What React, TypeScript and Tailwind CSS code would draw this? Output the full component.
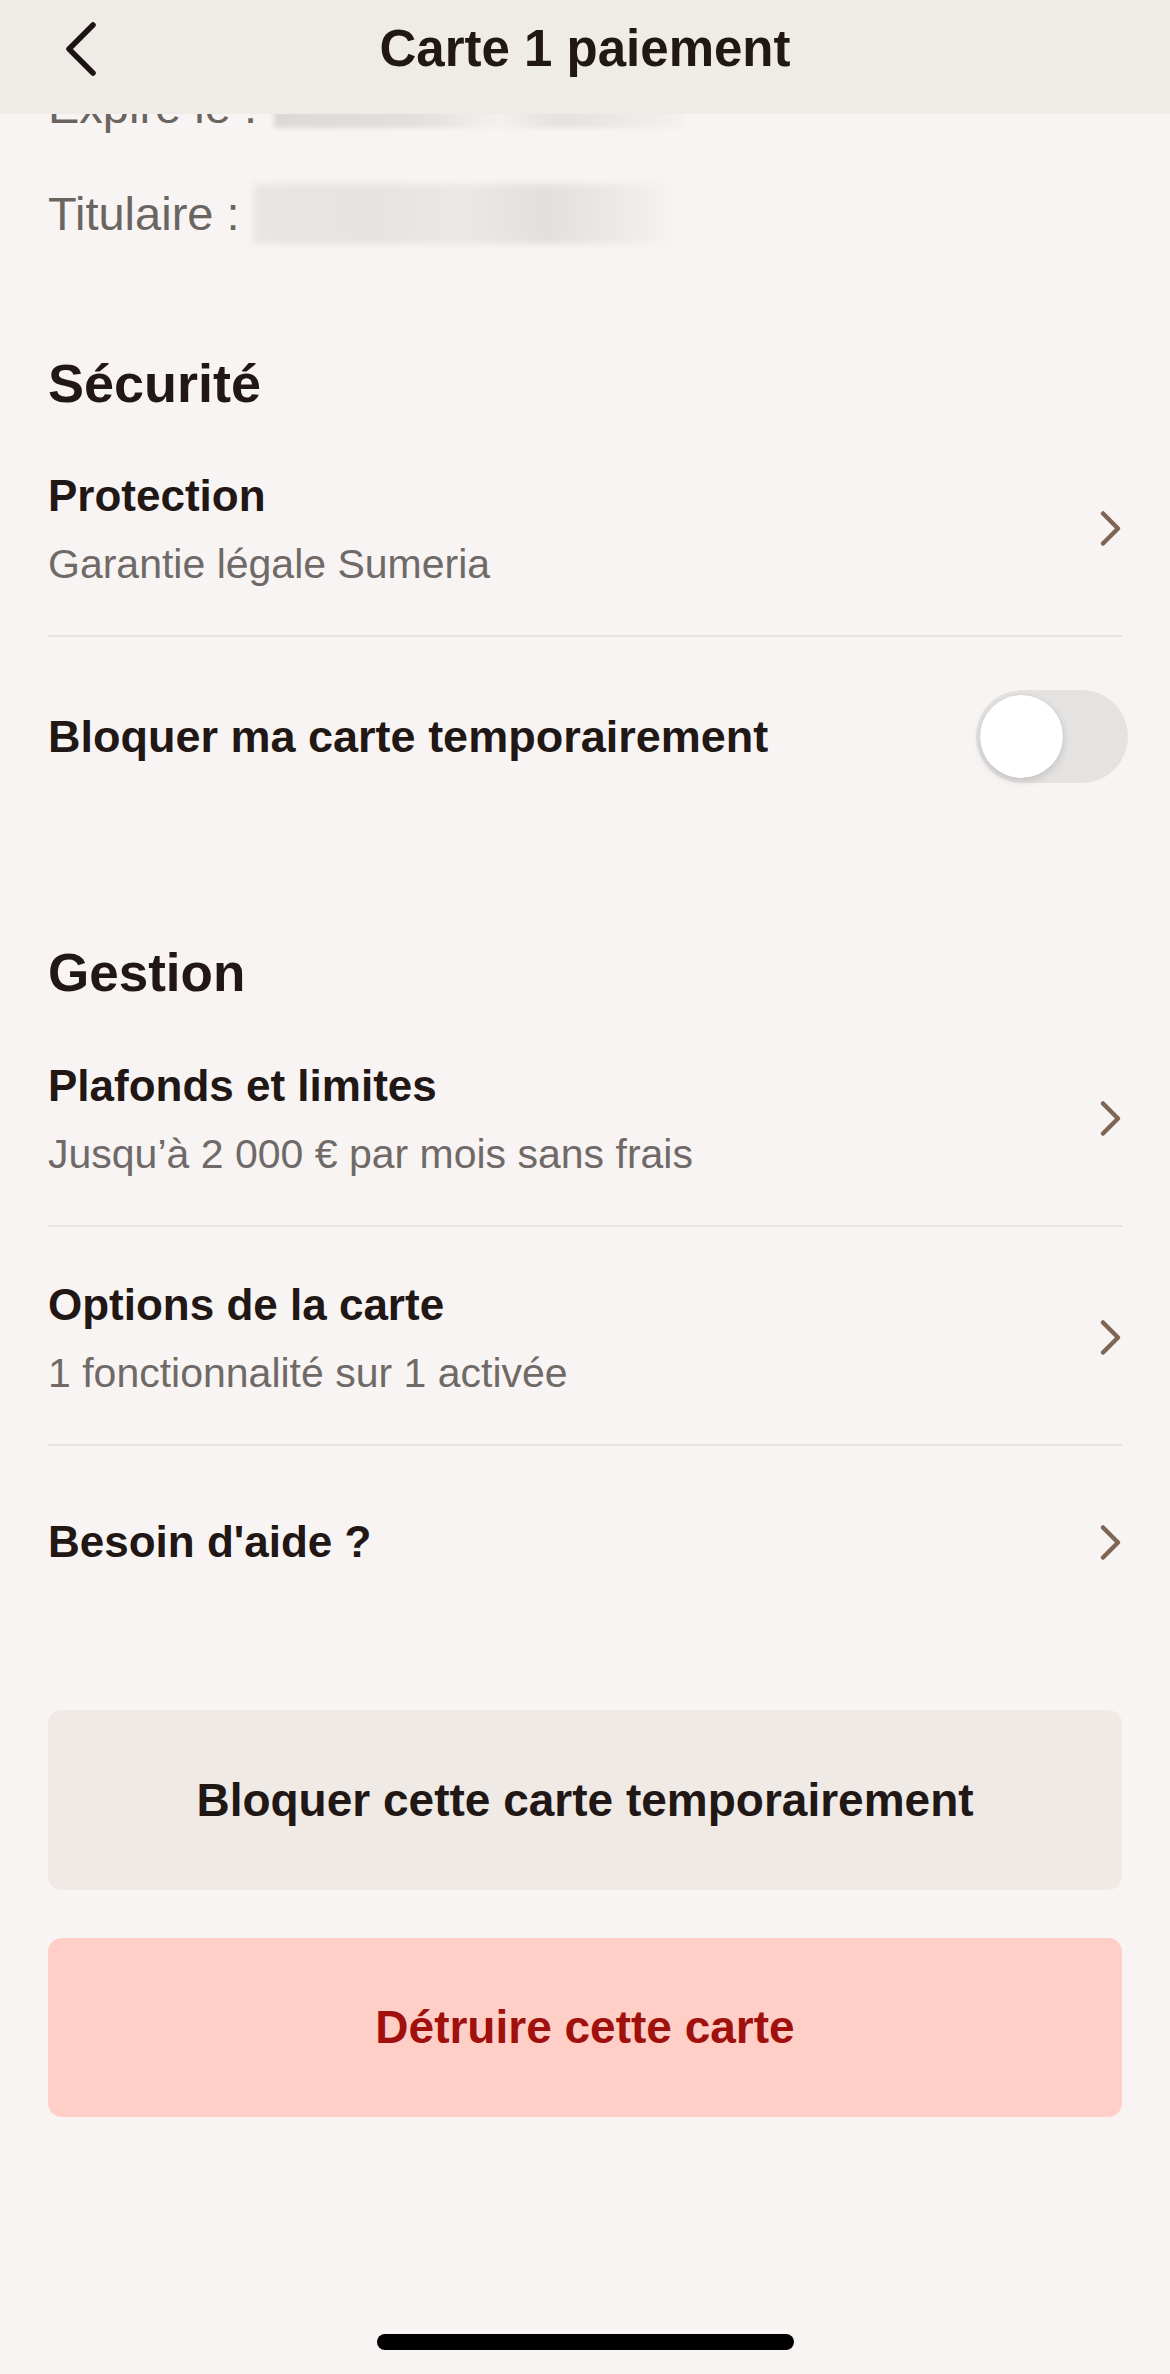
import React from "react";

type LinkRowProps = {
  title: string;
  subtitle?: string;
  className?: string;
};

function Chevron() {
  return (
    <svg width="23" height="37" viewBox="0 0 23 37" fill="none" className="shrink-0">
      <path d="M4 3.5 L19 18.5 L4 33.5" stroke="#7f6556" strokeWidth="4.5" strokeLinecap="round" strokeLinejoin="round" />
    </svg>
  );
}

function LinkRow({ title, subtitle, className = "" }: LinkRowProps) {
  return (
    <div className={["flex items-center justify-between", className].join(" ")}>
      <div>
        <p className="text-[44px] font-bold leading-[52px] text-[#211714]">{title}</p>
        {subtitle && (
          <p className="mt-[19px] text-[41px] leading-[46px] text-[#6f6a67]">{subtitle}</p>
        )}
      </div>
      <Chevron />
    </div>
  );
}

function Divider() {
  return <div className="h-[2px] bg-[#e9e3de]" />;
}

export default function App() {
  return (
    <div className="relative min-h-[2374px] w-full bg-[#f8f4f3] font-['Liberation_Sans',Arial,sans-serif] text-[#211714]">
      <header className="absolute inset-x-0 top-0 z-10 h-[114px] bg-[#efebe7]">
        <div className="flex h-[98px] items-center">
          <div className="w-[112px] pl-[63px]">
            <svg width="34" height="56" viewBox="0 0 34 56" fill="none">
              <path d="M30 4 L6 28 L30 52" stroke="#1c1412" strokeWidth="5.5" strokeLinecap="round" strokeLinejoin="round" />
            </svg>
          </div>
          <h1 className="flex-1 text-center text-[51px] font-bold leading-[56px]">Carte 1 paiement</h1>
          <div className="w-[112px]" />
        </div>
      </header>

      <main className="px-[48px] pt-[77px]">
        <div className="flex items-start gap-[17px]">
          <span className="text-[47px] leading-[60px] text-[#6b6561]">Expire le :</span>
          <div className="mt-[28px] h-[23px] w-[407px] bg-[linear-gradient(90deg,#dcd9d7,#e2dfdd_35%,#f3f0ef_55%,#e4e1df_70%,#f3f0ef)] blur-[2px]" />
        </div>
        <div className="mt-[47px] flex items-center gap-[14px]">
          <span className="text-[47px] leading-[60px] text-[#6b6561]">Titulaire :</span>
          <div className="h-[60px] w-[418px] bg-[linear-gradient(90deg,#e8e5e3,#e6e3e1_30%,#ebe8e6_50%,#e2dfdd_70%,#eeebea_90%,#f6f3f2)] blur-[3px]" />
        </div>

        <h2 className="mt-[108px] mb-[4px] text-[54px] font-bold leading-[62px]">Sécurité</h2>
        <LinkRow title="Protection" subtitle="Garantie légale Sumeria" className="pt-[52px] pb-[48px]" />
        <Divider />
        <div className="flex items-center justify-between pt-[53px]">
          <p className="text-[45px] font-bold leading-[52px]">Bloquer ma carte temporairement</p>
          <div className="-mr-[6px] flex h-[93px] w-[152px] items-center rounded-full bg-[#e5e3e1] px-[4px]">
            <div className="h-[83px] w-[83px] rounded-full bg-white shadow-[0_3px_8px_rgba(0,0,0,0.15),0_0_1px_rgba(0,0,0,0.12)]" />
          </div>
        </div>

        <h2 className="mt-[159px] mb-[4px] text-[53px] font-bold leading-[62px]">Gestion</h2>
        <LinkRow title="Plafonds et limites" subtitle="Jusqu’à 2 000 € par mois sans frais" className="pt-[52px] pb-[48px]" />
        <Divider />
        <LinkRow title="Options de la carte" subtitle="1 fonctionnalité sur 1 activée" className="pt-[52px] pb-[48px]" />
        <Divider />
        <LinkRow title="Besoin d'aide ?" className="pt-[70px]" />

        <button
          type="button"
          className="mt-[142px] flex h-[180px] w-full items-center justify-center rounded-[14px] bg-[#efeae6] text-[46px] font-bold text-[#211714]"
        >
          Bloquer cette carte temporairement
        </button>
        <button
          type="button"
          className="mt-[48px] flex h-[179px] w-full items-center justify-center rounded-[14px] bg-[#ffcec7] text-[46px] font-bold text-[#a0100c]"
        >
          Détruire cette carte
        </button>
      </main>

      <div className="mt-[217px] flex justify-center">
        <div className="h-[16px] w-[417px] rounded-full bg-black" />
      </div>
    </div>
  );
}
